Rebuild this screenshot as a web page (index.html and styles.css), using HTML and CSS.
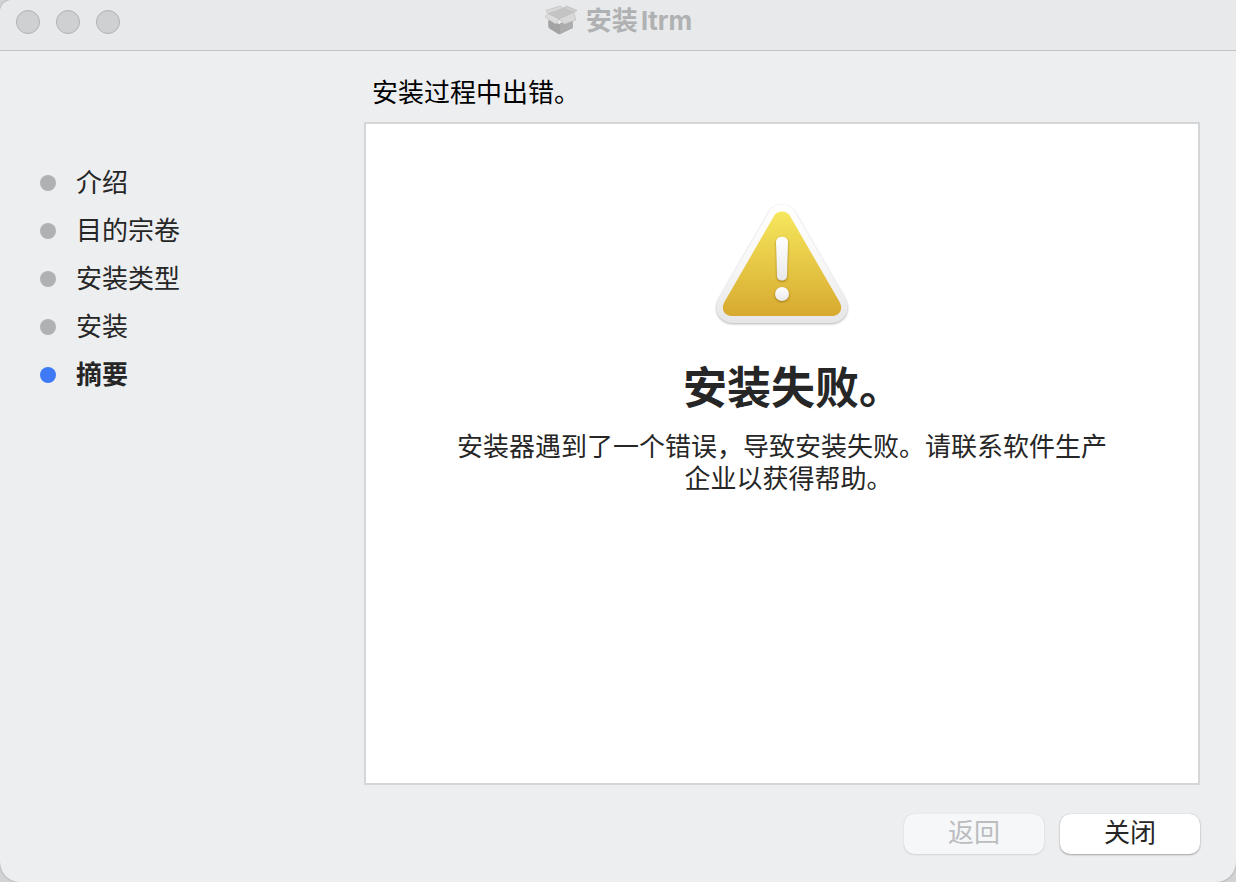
FILE: index.html
```html
<!DOCTYPE html>
<html lang="zh-CN">
<head>
    <meta charset="UTF-8">
    <meta name="viewport" content="width=device-width, initial-scale=1.0">
    <title>安装ltrm</title>
    <link rel="stylesheet" href="styles.css">
</head>
<body>
<div class="window">
    <header class="title-bar">
        <div class="window-controls">
            <button type="button" aria-label="关闭窗口"></button>
            <button type="button" aria-label="最小化"></button>
            <button type="button" aria-label="缩放"></button>
        </div>
        <div class="window-title">
            <svg class="package-icon" width="34" height="32" viewBox="0 2 32 30" aria-hidden="true">
                <path d="M4 16 15 20 27 16V23Q27 24 26 24L16 29Q15 30 13 29L5 24Q4 23 4 22Z" fill="#a3a3a4"/>
                <path d="M15 19 27 15V23Q27 24 26 24L15 29Z" fill="#adadae"/>
                <path d="M4 10 18 5 28 9 14 16Z" fill="#c4c4c5"/>
                <path d="M2 7 15 3 18 5 4 10Z" fill="#d8d8d9" stroke="#b9b9ba" stroke-width=".6"/>
                <path d="M18 5 21 3 31 7 28 9Z" fill="#cececf" stroke="#b4b4b5" stroke-width=".6"/>
                <path d="M4 10 14 15 11 20 1 13Z" fill="#dcdcdd" stroke="#b9b9ba" stroke-width=".6"/>
                <path d="M14 15 28 9 30 16 19 20Z" fill="#d8d8d9" stroke="#b9b9ba" stroke-width=".6"/>
            </svg>
            <h1>安装ltrm</h1>
        </div>
    </header>

    <div class="content">
        <ol class="steps">
            <li>介绍</li>
            <li>目的宗卷</li>
            <li>安装类型</li>
            <li>安装</li>
            <li class="current" aria-current="step">摘要</li>
        </ol>

        <main class="main">
            <p class="status">安装过程中出错。</p>
            <section class="panel">
                <svg class="warning-icon" width="144" height="130" viewBox="0 0 144 130" aria-hidden="true">
                    <defs>
                        <linearGradient id="frame" x1="0" y1="0" x2="0" y2="1">
                            <stop offset="0" stop-color="#ffffff"/>
                            <stop offset=".55" stop-color="#f6f6f6"/>
                            <stop offset="1" stop-color="#e6e6e8"/>
                        </linearGradient>
                        <linearGradient id="gold" x1="0" y1="0" x2="0" y2="1">
                            <stop offset="0" stop-color="#f6e75d"/>
                            <stop offset="1" stop-color="#d7a92f"/>
                        </linearGradient>
                        <linearGradient id="mark" x1="0" y1="0" x2="0" y2="1">
                            <stop offset="0" stop-color="#ffffff"/>
                            <stop offset="1" stop-color="#e9e9e9"/>
                        </linearGradient>
                    </defs>
                    <path class="frame" d="M59 10C64 0 80 0 85 10L135 96C142 109 134 121 121 121H23C10 121 2 109 9 96Z" fill="url(#frame)"/>
                    <path d="M64 14C67 8 77 8 80 14L129 99C134 107 130 114 121 114H23C14 114 10 107 15 99Z" fill="url(#gold)"/>
                    <g class="mark" fill="url(#mark)">
                        <path d="M66 40C66 33 78 33 78 40L77 74C77 80 67 80 67 74Z"/>
                        <circle cx="72" cy="92" r="7"/>
                    </g>
                </svg>
                <h2>安装失败。</h2>
                <p class="message">安装器遇到了一个错误，导致安装失败。请联系软件生产<span class="last-line">企业以获得帮助。</span></p>
            </section>
            <footer class="actions">
                <button type="button" disabled>返回</button>
                <button type="button">关闭</button>
            </footer>
        </main>
    </div>
</div>
</body>
</html>
```

FILE: styles.css
```css
* {
    margin: 0;
    padding: 0;
    box-sizing: border-box;
}

body {
    background: #d2d3d4;
    color: #262626;
    font-family: Inter, "Noto Sans CJK SC", sans-serif;
    font-size: 26px;
    line-height: 32px;
}

.window {
    display: flex;
    flex-direction: column;
    min-height: 100vh;
    overflow: hidden;
    background: #edeef0;
    border-radius: 12px 0 20px 20px;
    box-shadow: 0 0 2px #8c8c8c;
}

/* 标题栏 */
.title-bar {
    display: grid;
    grid-template-columns: 1fr auto 1fr;
    align-items: center;
    height: 51px;
    padding: 0 16px 7px;
    background: #e8e9eb;
    border-bottom: 1px solid #c3c4c6;
}

.window-controls {
    display: flex;
    gap: 16px;
}

.window-controls button {
    width: 24px;
    height: 24px;
    background: #cfd0d1;
    border: 1px solid #b0b1b2;
    border-radius: 50%;
}

.window-title {
    display: flex;
    align-items: center;
    gap: 8px;
    padding-bottom: 2px;
    color: #b0b1b2;
}

.window-title h1 {
    font-size: 26px;
    font-weight: 700;
    text-autospace: normal;
}

/* 主体 */
.content {
    display: flex;
    flex: 1;
}

.steps {
    flex: 0 0 364px;
    padding: 116px 0 0 40px;
    list-style: none;
}

.steps li {
    display: flex;
    align-items: center;
    gap: 20px;
    margin-bottom: 16px;
}

.steps li::before {
    content: "";
    width: 16px;
    height: 16px;
    background: #b0b1b2;
    border-radius: 50%;
}

.steps .current {
    font-weight: 700;
}

.steps .current::before {
    background: #3f7af6;
}

.main {
    display: flex;
    flex: 1;
    flex-direction: column;
    padding: 26px 36px 28px 0;
}

.status {
    margin-bottom: 13px;
    padding-left: 8px;
    color: #000;
}

.panel {
    display: flex;
    flex: 1;
    flex-direction: column;
    align-items: center;
    padding-top: 78px;
    background: #fff;
    border: 2px solid #d5d6d8;
    text-align: center;
}

.warning-icon .frame {
    filter: drop-shadow(0 1px 1px rgba(0, 0, 0, 0.3));
}

.warning-icon .mark {
    filter: drop-shadow(0 1px 1px rgba(110, 80, 0, 0.6));
}

/* 句末标点只占半个字宽 */
.panel h2,
.last-line {
    font-feature-settings: "halt";
}

.panel h2 {
    margin: 24px 0 11px;
    font-size: 44px;
    font-weight: 700;
    line-height: 64px;
}

.message {
    max-width: 664px;
}

/* 底部按钮 */
.actions {
    display: flex;
    justify-content: flex-end;
    gap: 16px;
    margin-top: 29px;
}

.actions button {
    width: 140px;
    height: 40px;
    padding-bottom: 2px;
    background: #fff;
    border: none;
    border-radius: 10px;
    box-shadow: 0 0 1px rgba(0, 0, 0, 0.25), 0 1px 2px rgba(0, 0, 0, 0.3);
    color: #262626;
    font: inherit;
}

.actions button:disabled {
    background: #f6f7f9;
    box-shadow: 0 0 1px rgba(0, 0, 0, 0.15), 0 1px 2px rgba(0, 0, 0, 0.1);
    color: #bbbcbe;
}
```
